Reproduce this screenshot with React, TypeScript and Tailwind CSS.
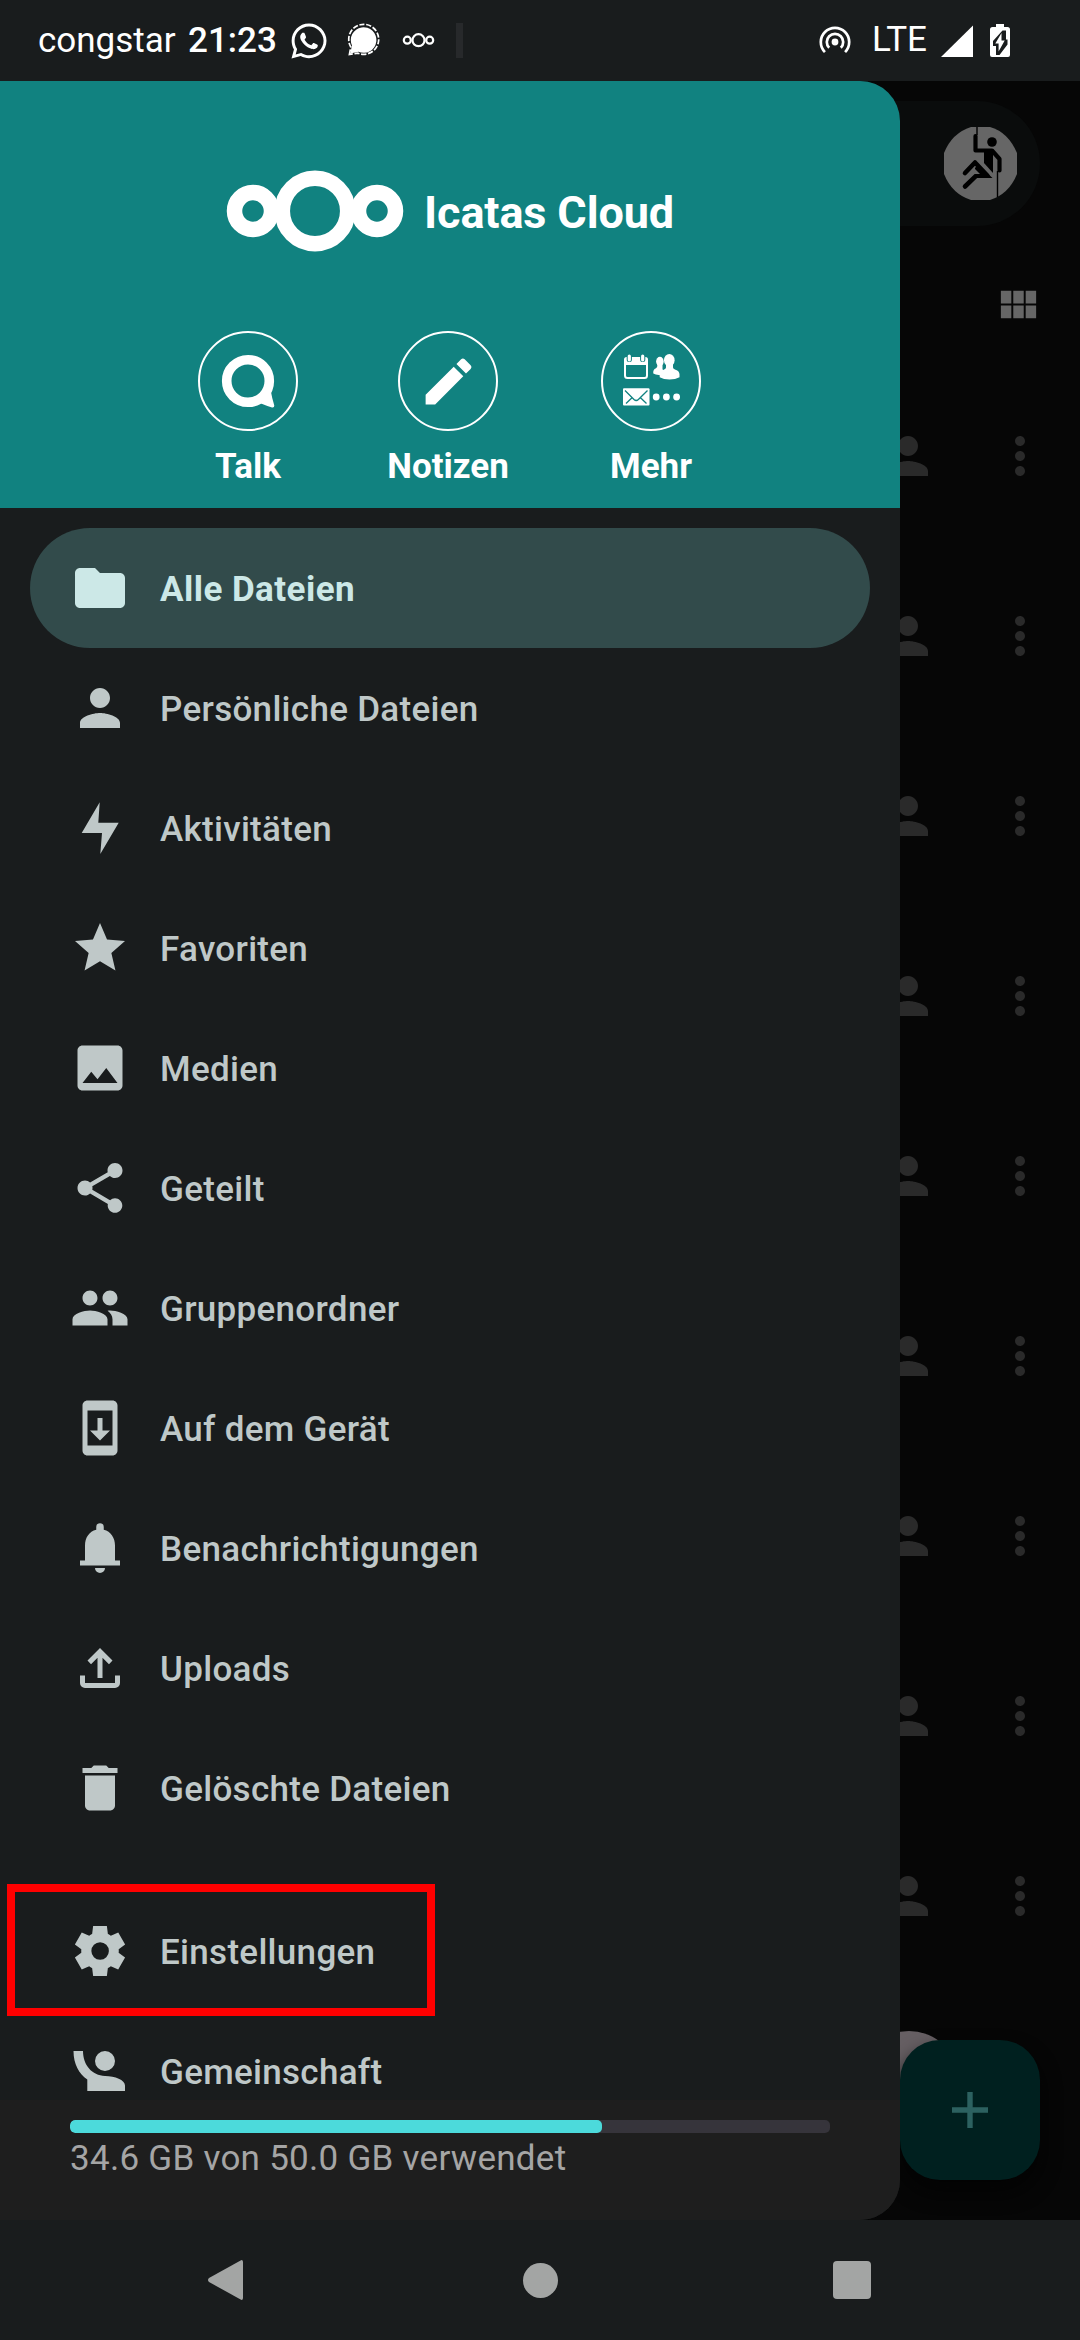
import type { ReactNode } from "react";
import { MdDelete, MdFolder, MdImage, MdMoreVert, MdPeople, MdPerson, MdShare, MdStar, MdSystemUpdate, MdViewModule } from "react-icons/md";
import { FaWhatsapp } from "react-icons/fa";

function Glyph({ d, box = "0 0 24 24", className = "size-[60px]" }: { d: string; box?: string; className?: string }) {
  return (
    <svg viewBox={box} className={className} fill="currentColor" fillRule="evenodd">
      <path d={d} />
    </svg>
  );
}

const BOLT = "M29.7 4.3 28.3 24.7h20.4L30.3 56l1.7-21H11.7Z";
const BELL = "M12 22a2 2 0 0 0 2-2h-4a2 2 0 0 0 2 2zM18 17v-6c0-3.07-1.64-5.64-4.5-6.32V3.6a1.5 1.5 0 0 0-3 0v1.08C7.63 5.36 6 7.92 6 11v6H4v2h16v-2z";
const UPLOAD = "M11 16V7.85l-2.6 2.6L7 9l5-5 5 5-1.4 1.45-2.6-2.6V16h-2Zm-5 4q-.825 0-1.413-.588T4 18v-3h2v3h12v-3h2v3q0 .825-.588 1.413T18 20H6Z";
const GEAR =
  "m9.25 22l-.4-3.2q-.325-.125-.612-.3t-.563-.375L4.7 19.375l-2.75-4.75l2.575-1.95Q4.5 12.5 4.5 12.338v-.675q0-.163.025-.338L1.95 9.375l2.75-4.75l2.975 1.25q.275-.2.575-.375t.6-.3l.4-3.2h5.5l.4 3.2q.325.125.613.3t.562.375l2.975-1.25l2.75 4.75l-2.575 1.95q.025.175.025.338v.674q0 .163-.05.338l2.575 1.95l-2.75 4.75l-2.95-1.25q-.275.2-.575.375t-.6.3l-.4 3.2h-5.5Zm2.8-6.5q1.45 0 2.475-1.025T15.55 12q0-1.45-1.025-2.475T12.05 8.5q-1.475 0-2.488 1.025T8.55 12q0 1.45 1.012 2.475T12.05 15.5Z";
const WAVE =
  "M3.5 10H13C13 24 22 34.5 35 35C45 35 55 39 55 44.5V50H17.3V38.5C9 33 3.5 23 3.5 10ZM35 10a10 10 0 1 1 0 20a10 10 0 1 1 0-20Z";

const I = "size-[60px]";

const items: { label: string; icon: ReactNode; active?: boolean }[] = [
  { label: "Alle Dateien", icon: <MdFolder className={I} />, active: true },
  { label: "Persönliche Dateien", icon: <MdPerson className={I} /> },
  { label: "Aktivitäten", icon: <Glyph box="0 0 60 60" d={BOLT} /> },
  { label: "Favoriten", icon: <MdStar className={I} /> },
  { label: "Medien", icon: <MdImage className={I} /> },
  { label: "Geteilt", icon: <MdShare className={I} /> },
  { label: "Gruppenordner", icon: <MdPeople className={I} /> },
  { label: "Auf dem Gerät", icon: <MdSystemUpdate className={I} /> },
  { label: "Benachrichtigungen", icon: <Glyph d={BELL} /> },
  { label: "Uploads", icon: <Glyph d={UPLOAD} /> },
  { label: "Gelöschte Dateien", icon: <MdDelete className={I} /> },
];

function MenuItem({ label, icon, active, children }: { label: string; icon: ReactNode; active?: boolean; children?: ReactNode }) {
  return (
    <div
      className={
        active
          ? "relative flex h-[120px] shrink-0 items-center gap-[30px] rounded-full bg-[#324b4b] pl-[40px] text-[#cce8e7]"
          : "relative flex h-[120px] shrink-0 items-center gap-[30px] pl-[40px] text-[#bfc8c8]"
      }
    >
      {icon}
      <span className={active ? "pt-[4px] text-[35px] font-bold tracking-[0.45px]" : "pt-[4px] text-[35px] font-medium tracking-[0.3px]"}>{label}</span>
      {children}
    </div>
  );
}

function StatusBar() {
  return (
    <div className="flex h-[81px] shrink-0 items-center bg-[#191c1d] pl-[38px] text-[35px] text-white">
      <span className="w-[150px] pt-[2px]">congstar</span>
      <span className="w-[104px] pt-[2px] font-medium">21:23</span>
      <FaWhatsapp className="-ml-[3px] size-[40px]" />
      <svg className="ml-[18px] size-[35px]" viewBox="0 0 35 35" fill="none">
        <path d="M3.2 30.5 5 22.5A12.8 12.8 0 1 1 11.5 28.8Z" fill="#fff" />
        <path d="M2.4 31.4 3.8 24A15 15 0 1 1 11 30.2Z" stroke="#fff" strokeWidth="1.7" strokeDasharray="5.2 1.7" />
        <path d="M5.4 28.6 6.6 24l4 3.6Z" fill="#fff" />
      </svg>
      <svg className="ml-[20px] h-[17px] w-[33px]" viewBox="0 0 33 17" fill="none" stroke="#fff" strokeWidth="2.2">
        <circle cx="16.5" cy="8.2" r="6" />
        <circle cx="5.3" cy="8.2" r="3.5" />
        <circle cx="27.7" cy="8.2" r="3.5" />
      </svg>
      <div className="ml-[21px] h-[35px] w-[7px] bg-[#27292b]" />
      <div className="ml-auto flex items-center">
        <svg className="size-[34px]" viewBox="0 0 34 34" fill="none" stroke="#fff" strokeWidth="2.7">
          <circle cx="17" cy="18" r="3.4" fill="#fff" stroke="none" />
          <path d="M6.9 28.1a14.2 14.2 0 1 1 20.2 0" />
          <path d="M11.2 23.8a8.2 8.2 0 1 1 11.6 0" />
        </svg>
        <span className="ml-[20px] w-[68px]">LTE</span>
        <svg className="h-[32px] w-[33px]" viewBox="0 0 33 32">
          <path d="M1 32 33 .5V32Z" fill="#fff" />
        </svg>
        <svg className="mr-[70px] ml-[17px] h-[33px] w-[20px]" viewBox="0 0 20 33">
          <path d="M6 0h8v3h3.5Q20 3 20 5.5V31q0 2-2 2H2q-2 0-2-2V5.5Q0 3 2.500 3H6Z" fill="#fff" />
          <path d="M12.500 6.500H16v9h1.500v5L9.500 31H6v-9H3v-5Z" fill="#191c1d" />
          <path d="M11.500 9v7.500h3.200L8.600 27.500v-8H5.300Z" fill="#fff" />
        </svg>
      </div>
    </div>
  );
}

function Avatar() {
  return (
    <svg className="size-[73px]" viewBox="0 0 73 73" fill="none">
      <path d="M27 0H46Q64 5 73 26V47Q65 67 46 73H27Q8 67 0 47V26Q8 6 27 0Z" fill="#666" />
      <path d="M33 0V8M53.500 44V70" stroke="#000" strokeWidth="1.400" />
      <circle cx="48" cy="15" r="4.800" fill="#000" />
      <path d="M31.500 9V23.500H48L55.500 32V43.500" stroke="#000" strokeWidth="4.200" strokeLinejoin="round" strokeLinecap="round" />
      <path d="M40 23H49V46L40 36Z" fill="#000" />
      <path d="M21 46 31 35.500 43.500 48.800H32L21 59.500" stroke="#000" strokeWidth="4.600" strokeLinejoin="round" strokeLinecap="round" />
      <path d="M31 41 34 37.500 48.500 51H31Z" fill="#000" />
      <path d="M30.500 41.500 36 47H30Z" fill="#666" />
    </svg>
  );
}

function FileList() {
  return (
    <div className="relative flex flex-1 flex-col bg-[#060606]">
      <div className="mt-[20px] mr-[40px] flex h-[125px] items-center justify-end rounded-r-full bg-[#0a0c0c] pr-[23px]">
        <Avatar />
      </div>
      <div className="mt-[55px] flex h-[47px] justify-end pr-[38px] text-[#666]">
        <MdViewModule className="size-[47px]" />
      </div>
      <div className="mt-[38px] flex flex-col">
        {Array.from({ length: 9 }, (_, i) => (
          <div key={i} className="flex h-[180px] items-center justify-end pr-[30px] text-[#2a2a2a]">
            <MdPerson className="mr-[52px] size-[60px]" />
            <MdMoreVert className="size-[60px]" />
          </div>
        ))}
      </div>
      <div className="absolute top-[1950px] left-[859px] size-[100px] rounded-full bg-[#665f63]" />
      <div className="absolute right-[40px] bottom-[40px] flex size-[140px] items-center justify-center rounded-[40px] bg-[#00201f] text-[#2c6160] shadow-[0_12px_20px_#030303]">
        <Glyph className="size-[36px]" box="0 0 36 36" d="M15.300 0h5.400v15.300H36v5.400H20.700V36h-5.400V20.700H0v-5.400h15.300Z" />
      </div>
    </div>
  );
}

function AppLink({ label, children }: { label: string; children: ReactNode }) {
  return (
    <div className="flex flex-col items-center">
      <div className="flex size-[100px] items-center justify-center rounded-full border-2 border-white">{children}</div>
      <span className="mt-[15px] text-[35px] leading-[41px] font-bold">{label}</span>
    </div>
  );
}

function TalkIcon() {
  return (
    <svg viewBox="0 0 60 60" className="size-[60px]">
      <circle cx="30" cy="30" r="21.300" fill="none" stroke="#fff" strokeWidth="9.600" />
      <path d="M53 41Q54 47 56.300 54.500Q56.300 57 54 56.500Q49 55 43 52.500L42 46Z" fill="#fff" />
    </svg>
  );
}

function MoreIcon() {
  return (
    <svg viewBox="0 0 60 60" className="size-[60px]">
      <rect x="4" y="8" width="22" height="19" rx="2.500" fill="none" stroke="#fff" strokeWidth="2" />
      <path d="M3 8.500Q3 6 5.500 6H24.500Q27 6 27 8.500V14H3Z" fill="#fff" />
      <path d="M8.300 5.500v3M21.700 5.500v3" stroke="#118280" strokeWidth="5.200" strokeLinecap="round" />
      <path d="M8.300 5v4M21.700 5v4" stroke="#fff" strokeWidth="3.200" strokeLinecap="round" />
      <ellipse cx="38.900" cy="10.500" rx="3.800" ry="4.700" fill="#fff" />
      <path d="M36.500 13h5v5l3 6.500Q37 24.500 32.300 22.500 31.700 18.500 35 17.300 36.500 16.500 36.500 13Z" fill="#fff" />
      <ellipse cx="48.300" cy="9.200" rx="5.300" ry="6.200" fill="#fff" />
      <path d="M45 12h7v4.500q0 1.500 2.500 2.200 4 1.300 4 4.800v2.800q-4 2.200-10 2.200t-9.800-2.200v-2.800q0-3.500 4-4.800 2.300-.700 2.300-2.200Z" fill="#fff" />
      <rect x="2" y="37.300" width="26.500" height="17.300" rx="1" fill="#fff" />
      <path d="M4 39.500 13 48.500Q15.200 50.500 17.400 48.500L26.500 39.500M5 52.500 11 46.800M25.500 52.500 19.500 46.800" fill="none" stroke="#118280" strokeWidth="1.300" />
      <circle cx="35.200" cy="46" r="3.400" fill="#fff" />
      <circle cx="45.400" cy="46" r="3.400" fill="#fff" />
      <circle cx="55.600" cy="46" r="3.400" fill="#fff" />
    </svg>
  );
}

function Drawer() {
  return (
    <div className="absolute top-[81px] left-0 flex h-[2139px] w-[900px] flex-col overflow-hidden rounded-r-[40px] bg-[#191c1d]">
      <div className="flex h-[427px] shrink-0 flex-col items-center bg-[#118280] text-white">
        <div className="mt-[88px] flex h-[84px] items-center">
          <svg viewBox="0 0 178 84" className="h-[84px] w-[178px]" fill="none" stroke="#fff" strokeWidth="15.500">
            <circle cx="89" cy="42" r="32.700" />
            <circle cx="27" cy="42" r="18.500" />
            <circle cx="151" cy="42" r="18.500" />
          </svg>
          <span className="ml-[20px] pt-[4px] text-[45px] font-bold tracking-[-0.15px]">Icatas Cloud</span>
        </div>
        <div className="mt-[78px] ml-[2px] grid w-[605px] grid-cols-[199px_201px_205px]">
          <AppLink label="Talk">
            <TalkIcon />
          </AppLink>
          <AppLink label="Notizen">
            <Glyph className="size-[61px]" d="M3 17.250V21h3.750L17.810 9.940l-3.750-3.750L3 17.250zM20.710 7.040a1 1 0 0 0 0-1.410l-2.340-2.340a1 1 0 0 0-1.410 0l-1.830 1.830 3.750 3.750 1.830-1.830z" />
          </AppLink>
          <AppLink label="Mehr">
            <MoreIcon />
          </AppLink>
        </div>
      </div>
      <div className="flex h-[1592px] shrink-0 flex-col overflow-hidden px-[30px] pt-[20px]">
        {items.map((item) => (
          <MenuItem key={item.label} {...item} />
        ))}
        <div className="h-[43px] shrink-0" />
        <MenuItem label="Einstellungen" icon={<Glyph d={GEAR} />}>
          <div className="absolute -top-[7px] -left-[23px] h-[132px] w-[428px] border-8 border-[#ff0000]" />
        </MenuItem>
        <MenuItem label="Gemeinschaft" icon={<Glyph box="0 0 60 60" d={WAVE} />} />
      </div>
      <div className="flex h-[120px] shrink-0 flex-col bg-[#1e1e1e] px-[70px] pt-[20px]">
        <div className="h-[13px] overflow-hidden rounded-[5px] bg-[#36343b]">
          <div className="h-full w-[532px] rounded-[5px] bg-[#4cdadb]" />
        </div>
        <span className="mt-[5px] text-[35px] leading-[41px] tracking-[0.27px] text-[#a5a5a5]">34.6 GB von 50.0 GB verwendet</span>
      </div>
    </div>
  );
}

function NavBar() {
  return (
    <div className="grid h-[120px] shrink-0 grid-cols-[452px_176px_452px] items-center justify-items-center bg-[#191c1d] text-[#a3a5a4]">
      <Glyph className="size-[40px]" box="0 0 40 40" d="M35.500 0Q37 0 37 2V38Q37 40 35.500 40L3 22Q1 20 3 18Z" />
      <div className="size-[35px] rounded-full bg-current" />
      <div className="-ml-[4px] size-[38px] rounded-[4px] bg-current" />
    </div>
  );
}

export default function App() {
  return (
    <div className="relative flex h-[2340px] w-[1080px] flex-col overflow-hidden bg-[#060606] font-['Roboto',sans-serif]">
      <StatusBar />
      <FileList />
      <NavBar />
      <Drawer />
    </div>
  );
}
